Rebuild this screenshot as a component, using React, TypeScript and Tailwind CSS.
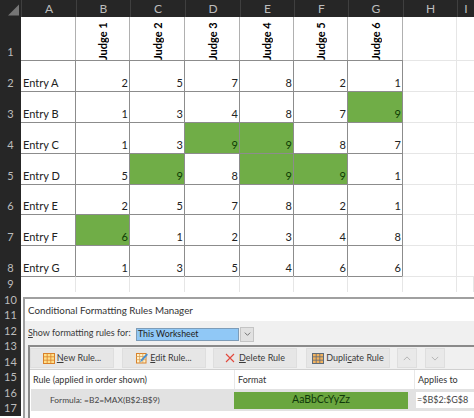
import type { ReactNode } from 'react'

const font = { fontFamily: 'Lato, "Open Sans", sans-serif' }

const columns = ['A', 'B', 'C', 'D', 'E', 'F', 'G', 'H', 'I']
const widths = [55, 54, 55, 55, 54, 54, 55, 54, 17]
const judges = ['Judge 1', 'Judge 2', 'Judge 3', 'Judge 4', 'Judge 5', 'Judge 6']
const rows: [string, number[], number[]][] = [
  ['Entry A', [2, 5, 7, 8, 2, 1], []],
  ['Entry B', [1, 3, 4, 8, 7, 9], [5]],
  ['Entry C', [1, 3, 9, 9, 8, 7], [2, 3]],
  ['Entry D', [5, 9, 8, 9, 9, 1], [1, 3, 4]],
  ['Entry E', [2, 5, 7, 8, 2, 1], []],
  ['Entry F', [6, 1, 2, 3, 4, 8], [0]],
  ['Entry G', [1, 3, 5, 4, 6, 6], []],
]

function RowHead({ n, className }: { n: number; className: string }) {
  return (
    <div className={`w-[21px] shrink-0 bg-[#262626] text-[#bdbdbd] text-[11px] leading-none flex justify-center ${className}`}>
      {n}
    </div>
  )
}

function GridIcon({ fill, frame }: { fill: string; frame: string }) {
  return (
    <svg viewBox="0 0 12 11" className="w-[12px] h-[11px] shrink-0">
      <rect x="0.5" y="0.5" width="11" height="10" fill={fill} stroke={frame} />
      <path d="M0.5 3.8H11.5M0.5 7.2H11.5M4.2 0.5V10.5M7.8 0.5V10.5" stroke={frame} strokeWidth="0.8" />
    </svg>
  )
}

function ToolButton({ children, className, icon }: { children: ReactNode; className: string; icon?: ReactNode }) {
  return (
    <div className={`h-[20px] w-[84px] shrink-0 bg-[#e6e6e6] border border-[#dedede] flex items-center justify-center gap-[2px] text-[#3a3a3a] ${className}`}>
      {icon}
      <span className="whitespace-nowrap">{children}</span>
    </div>
  )
}

function ArrowButton({ d, className }: { d: string; className: string }) {
  return (
    <div className={`h-[20px] w-[20px] shrink-0 bg-[#e9e9e9] border border-[#dedede] flex items-center justify-center ${className}`}>
      <svg viewBox="0 0 10 6" className="w-[8px] h-[5px]"><path d={d} fill="none" stroke="#b4b4b4" strokeWidth="1.2" /></svg>
    </div>
  )
}

export default function App() {
  return (
    <div className="relative w-[474px] h-[418px] overflow-hidden bg-white" style={font}>
      <div className="flex h-[17px] bg-[#262626] text-[#bdbdbd] text-[12px]">
        <div className="w-[21px] shrink-0">
          <svg viewBox="0 0 21 17" className="w-[21px] h-[17px]"><path d="M8 15.5 L19 15.5 L19 4.5 Z" fill="#767676" /></svg>
        </div>
        {columns.map((c, i) => (
          <div key={c} className="flex items-center justify-center border-l border-[#3f3f3f]" style={{ width: widths[i] }}>{c}</div>
        ))}
      </div>

      <div className="flex h-[43px]">
        <RowHead n={1} className="h-[43px] items-end pb-[3px]" />
        <div className="w-[55px] shrink-0 border-r border-[#b0b0b0]" />
        {judges.map((j, i) => (
          <div key={j} className="shrink-0 border-r border-[#b0b0b0] flex justify-center pt-[3px]" style={{ width: widths[i + 1] }}>
            <span className="text-[11px] font-bold text-black leading-none whitespace-nowrap [writing-mode:vertical-rl] rotate-180 text-left">{j}</span>
          </div>
        ))}
        <div className="w-[54px] shrink-0 border-r border-[#e6e6e6]" />
      </div>

      {rows.map(([name, vals, hot], r) => (
        <div key={name} className="flex h-[30.9px]">
          <RowHead n={r + 2} className="h-full items-end pb-[3px]" />
          <div className="w-[55px] shrink-0 border-t border-r border-[#8c8c8c] flex items-end pl-[2px] text-[11px] leading-[17px] text-[#222]">{name}</div>
          {vals.map((v, i) => (
            <div
              key={i}
              className={`shrink-0 border-t border-r border-[#8c8c8c] flex items-end justify-end pr-[1px] text-[11px] leading-[17px] ${hot.includes(i) ? 'bg-[#70ad47] text-[#0d3d05]' : 'text-[#222]'}`}
              style={{ width: widths[i + 1] }}
            >
              {v}
            </div>
          ))}
          <div className="w-[54px] shrink-0 border-t border-r border-[#e6e6e6]" />
          <div className="w-[17px] shrink-0 border-t border-[#e6e6e6]" />
        </div>
      ))}

      {[9, 10, 11, 12, 13, 14, 15, 16, 17].map(n => (
        <div key={n} className="flex h-[15.5px]">
          <RowHead n={n} className="h-full items-center" />
          {n === 9 && widths.map((w, i) => (
            <div key={i} className={`border-r border-t border-r-[#e6e6e6] ${i < 7 ? 'border-t-[#8c8c8c]' : 'border-t-[#e6e6e6]'}`} style={{ width: w }} />
          ))}
        </div>
      ))}

      {/* dialog sits over the sheet */}
      <div className="absolute left-[23px] top-[297px] w-[451px] h-[121px] bg-white border-t-2 border-l-2 border-[#a0a0a0] flex flex-col text-[9px] text-[#3a3a3a]">
        <div className="h-[22px] pl-[3px] flex items-center text-[9.8px] text-[#333] whitespace-nowrap">Conditional Formatting Rules Manager</div>
        <div className="flex-1 bg-[#f0f0f0] flex flex-col">
          <div className="h-[24px] flex items-center pl-[3px] pt-[2px]">
            <span className="w-[108px] shrink-0 whitespace-nowrap -mt-[3px]"><span className="underline">S</span>how formatting rules for:</span>
            <div className="w-[103px] h-[13px] shrink-0 bg-[#90c8f6] border border-[#7d9cb8] flex items-center pl-[1px] text-[#222] text-[8.8px]">This Worksheet</div>
            <div className="ml-[1px] w-[14px] h-[15px] shrink-0 bg-[#e1e1e1] border border-[#c4c4c4] flex items-center justify-center">
              <svg viewBox="0 0 10 6" className="w-[7px] h-[4px]"><path d="M1 1l4 4 4-4" fill="none" stroke="#555" strokeWidth="1.2" /></svg>
            </div>
          </div>
          <div className="flex-1 ml-[3px] border-t-2 border-l-2 border-[#8a8a8a] flex flex-col">
            <div className="h-[23px] flex items-center border-b border-[#d0d0d0]">
              <ToolButton className="" icon={<GridIcon fill="#ffe08a" frame="#d9812b" />}><span className="underline">N</span>ew Rule...</ToolButton>
              <ToolButton className="ml-[8px]" icon={
                <svg viewBox="0 0 12 12" className="w-[12px] h-[12px] shrink-0">
                  <rect x="0.5" y="1.5" width="9.5" height="9.5" fill="#fff2c8" stroke="#d9812b" />
                  <path d="M0.5 4.5H10M0.5 7.7H10M3.6 1.5V11M6.8 1.5V11" stroke="#d9a05b" strokeWidth="0.8" />
                  <path d="M4 10.5l1-3 5.5-6 1.5 1.3-5.5 6z" fill="#4a90d0" />
                </svg>
              }><span className="underline">E</span>dit Rule...</ToolButton>
              <ToolButton className="ml-[7px]" icon={
                <svg viewBox="0 0 10 10" className="w-[10px] h-[10px] shrink-0 mr-[2px]"><path d="M1 1l8 8M9 1l-8 8" stroke="#e2483c" strokeWidth="1.1" /></svg>
              }><span className="underline">D</span>elete Rule</ToolButton>
              <ToolButton className="ml-[9px]" icon={<GridIcon fill="#f2b25e" frame="#5f6b78" />}>Dupli<span className="underline">c</span>ate Rule</ToolButton>
              <ArrowButton className="ml-[7px]" d="M1 5l4-4 4 4" />
              <ArrowButton className="ml-[8px]" d="M1 1l4 4 4-4" />
            </div>
            <div className="flex-1 bg-white flex flex-col">
              <div className="h-[19px] flex items-center text-[#333]">
                <span className="w-[204px] shrink-0 pl-[3px] whitespace-nowrap">Rule (applied in order shown)</span>
                <span className="w-[180px] shrink-0 pl-[3px] border-l border-[#e8e8e8] h-full flex items-center">Format</span>
                <span className="pl-[3px] border-l border-[#e8e8e8] h-full flex items-center">Applies to</span>
              </div>
              <div className="ml-[1px] h-[22px] bg-[#e2e2e2] flex items-center">
                <span className="w-[203px] shrink-0 pl-[19px] text-[8.4px] text-[#444] whitespace-nowrap">Formula: =B2=MAX(B$2:B$9)</span>
                <div className="w-[174px] h-[17px] shrink-0 bg-[#6aa63f] flex items-center justify-center text-[10.5px] text-[#10380a]">AaBbCcYyZz</div>
                <div className="ml-[8px] flex-1 h-[16px] bg-white flex items-center pl-[1px] text-[#444] whitespace-nowrap">=$B$2:$G$8</div>
              </div>
            </div>
          </div>
        </div>
      </div>
    </div>
  )
}
